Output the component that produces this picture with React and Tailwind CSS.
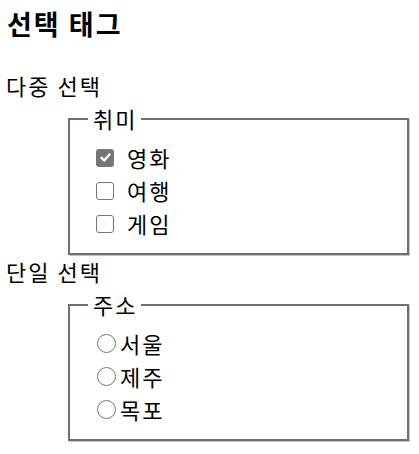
import React from "react";

function Check({ checked }) {
  return checked ? (
    <span className="inline-flex items-center justify-center w-[18px] h-[18px] rounded-[3px] bg-[#767676]">
      <svg width="13" height="13" viewBox="0 0 13 13">
        <path d="M2.5 6.8 L5.2 9.5 L10.5 3.5" fill="none" stroke="#fff" strokeWidth="2.4" strokeLinecap="round" strokeLinejoin="round" />
      </svg>
    </span>
  ) : (
    <span className="inline-block w-[18px] h-[18px] rounded-[3px] border border-[#767676] bg-white" />
  );
}

function Radio() {
  return <span className="inline-block w-[19px] h-[19px] rounded-full border border-[#767676] bg-white" />;
}

export default function App() {
  const font = { fontFamily: '"Noto Sans CJK KR", "Noto Sans", sans-serif' };
  return (
    <div className="bg-white w-[419px] h-[454px] text-black" style={font}>
      <h3 className="pt-[5px] pl-[7px] text-[27px] font-bold leading-[38px] tracking-[2px]">선택 태그</h3>
      <div className="mt-[26px] pl-[6px] text-[22px] leading-[33px] tracking-[2px]">다중 선택</div>
      <fieldset className="ml-[68px] w-[341px] border-2 border-[#707070] shadow-[1px_1px_0_#c4c4c4] pl-[18px] pb-[13px] text-[22px] leading-[33px] tracking-[2px]">
        <legend className="pl-[5px] pr-[4px]">취미</legend>
        <div className="pl-[8px] pt-[6px]">
          <div className="flex items-center">
            <Check checked />
            <span className="ml-[13px]">영화</span>
          </div>
          <div className="flex items-center">
            <Check />
            <span className="ml-[13px]">여행</span>
          </div>
          <div className="flex items-center">
            <Check />
            <span className="ml-[13px]">게임</span>
          </div>
        </div>
      </fieldset>
      <div className="pl-[6px] text-[22px] leading-[33px] tracking-[2px]">단일 선택</div>
      <fieldset className="ml-[68px] w-[341px] border-2 border-[#707070] shadow-[1px_1px_0_#c4c4c4] pl-[18px] pb-[13px] text-[22px] leading-[33px] tracking-[2px]">
        <legend className="pl-[5px] pr-[4px]">주소</legend>
        <div className="pl-[9px] pt-[6px]">
          {["서울", "제주", "목포"].map((t) => (
            <div key={t} className="flex items-center">
              <Radio />
              <span className="ml-[4px]">{t}</span>
            </div>
          ))}
        </div>
      </fieldset>
    </div>
  );
}
